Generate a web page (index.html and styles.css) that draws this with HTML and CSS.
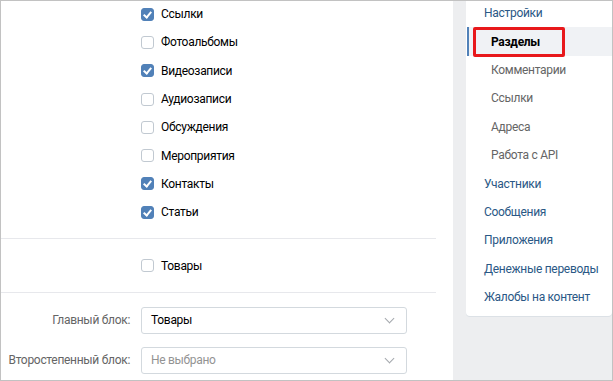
FILE: index.html
```html
<!DOCTYPE html>
<html lang="ru">
<head>
    <meta charset="UTF-8">
    <title>Разделы</title>
    <link rel="stylesheet" href="styles.css">
</head>
<body>
    <div class="frame">
        <section class="main">
            <div class="checks">
                <label class="check-row"><span class="box checked"></span>Ссылки</label>
                <label class="check-row"><span class="box"></span>Фотоальбомы</label>
                <label class="check-row"><span class="box checked"></span>Видеозаписи</label>
                <label class="check-row"><span class="box"></span>Аудиозаписи</label>
                <label class="check-row"><span class="box"></span>Обсуждения</label>
                <label class="check-row"><span class="box"></span>Мероприятия</label>
                <label class="check-row"><span class="box checked"></span>Контакты</label>
                <label class="check-row"><span class="box checked"></span>Статьи</label>
            </div>

            <div class="goods">
                <label class="check-row"><span class="box"></span>Товары</label>
            </div>

            <div class="blocks">
                <div class="field">
                    <span class="field-label">Главный блок:</span>
                    <div class="select">Товары<span class="chevron"></span></div>
                </div>
                <div class="field">
                    <span class="field-label">Второстепенный блок:</span>
                    <div class="select empty">Не выбрано<span class="chevron"></span></div>
                </div>
            </div>
        </section>

        <aside class="side">
            <nav class="menu">
                <a class="menu-item">Настройки</a>
                <a class="menu-item sub active">Разделы<span class="mark"></span></a>
                <a class="menu-item sub">Комментарии</a>
                <a class="menu-item sub">Ссылки</a>
                <a class="menu-item sub">Адреса</a>
                <a class="menu-item sub">Работа с API</a>
                <a class="menu-item">Участники</a>
                <a class="menu-item">Сообщения</a>
                <a class="menu-item">Приложения</a>
                <a class="menu-item">Денежные переводы</a>
                <a class="menu-item">Жалобы на контент</a>
            </nav>
        </aside>
    </div>
</body>
</html>
```

FILE: styles.css
```css
* {
    margin: 0;
    padding: 0;
    box-sizing: border-box;
}

body {
    font-family: Roboto, 'Open Sans', Arial, sans-serif;
    font-size: 12px;
    letter-spacing: -0.3px;
    color: #000;
    background-color: #ffffff;
}

.frame {
    width: 613px;
    height: 381px;
    display: flex;
    border: 1px solid #c2c2c2;
    background-color: #edeef0;
    overflow: hidden;
}

/* левая часть */

.main {
    width: 452px;
    background-color: #ffffff;
    padding-right: 17px;
}

.checks {
    margin-top: -1px;
    padding-left: 140px;
    padding-bottom: 12px;
    border-bottom: 1px solid #e7e8ec;
}

.check-row {
    display: flex;
    align-items: center;
    height: 28.3px;
}

.box {
    width: 13px;
    height: 13px;
    border: 1px solid #c1c9d1;
    border-radius: 3px;
    margin-right: 7px;
    background-color: #ffffff;
    position: relative;
}

.box.checked {
    background-color: #5181b8;
    border-color: #5181b8;
}

.box.checked::after {
    content: "";
    position: absolute;
    left: 3px;
    top: 1px;
    width: 3px;
    height: 6px;
    border: solid #ffffff;
    border-width: 0 2px 2px 0;
    transform: rotate(40deg);
}

.goods {
    padding: 12px 0 12px 140px;
    border-bottom: 1px solid #e7e8ec;
}

.blocks {
    padding-top: 14px;
}

.field {
    display: flex;
    align-items: center;
    margin-bottom: 13px;
}

.field-label {
    width: 129px;
    margin-right: 11px;
    text-align: right;
    color: #656565;
    white-space: nowrap;
}

.select {
    width: 266px;
    height: 27px;
    border: 1px solid #d3d9de;
    border-radius: 3px;
    padding: 0 9px;
    display: flex;
    align-items: center;
    justify-content: space-between;
}

.select.empty {
    color: #939393;
}

.chevron {
    width: 7px;
    height: 7px;
    border: solid #a4a8ad;
    border-width: 0 1px 1px 0;
    transform: rotate(45deg);
    margin: -4px 4px 0 0;
}

/* правое меню */

.side {
    margin-left: 13px;
    width: 146px;
}

.menu {
    background-color: #ffffff;
    border-radius: 0 0 4px 4px;
    box-shadow: 0 1px 0 0 #dce1e6;
    margin-top: -2px;
    padding-bottom: 5px;
}

.menu-item {
    display: flex;
    align-items: center;
    height: 28.4px;
    padding-left: 18px;
    color: #2a5885;
    white-space: nowrap;
    position: relative;
}

.menu-item.sub {
    padding-left: 25px;
    color: #656565;
}

.menu-item.active {
    color: #000;
    font-weight: bold;
    background-color: #f0f2f5;
    border-left: 2px solid #5181b8;
    margin-left: 1px;
    padding-left: 22px;
}

.mark {
    position: absolute;
    left: 4px;
    top: 0;
    width: 92px;
    height: 30px;
    border: 3px solid #e8181b;
    border-radius: 2px;
}
```
